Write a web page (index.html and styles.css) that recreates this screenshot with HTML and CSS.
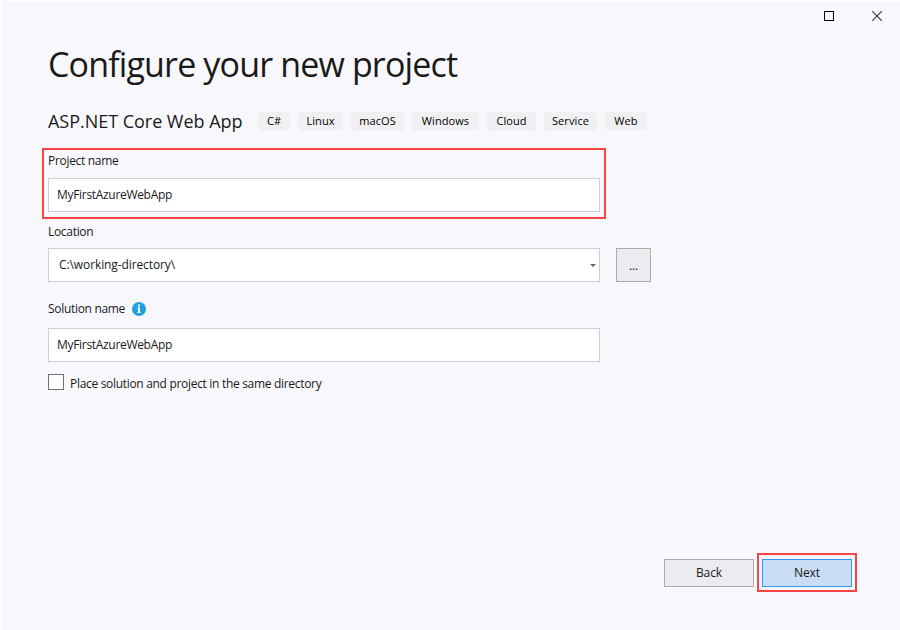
FILE: index.html
```html
<!DOCTYPE html>
<html lang="en">
<head>
<meta charset="utf-8">
<title>Configure your new project</title>
<link rel="stylesheet" href="styles.css">
</head>
<body>
<main class="dialog">
  <div class="window-controls">
    <svg class="control" width="10" height="10" viewBox="0 0 10 10"><rect x=".5" y=".5" width="9" height="9" fill="none" stroke="#000"/></svg>
    <svg class="control" width="10" height="10" viewBox="0 0 10 10"><path d="M.2.2 9.8 9.8M9.8.2.2 9.8" fill="none" stroke="#333" stroke-width="1.1"/></svg>
  </div>
  <h1 class="title"><span>Configure your new project</span></h1>
  <div class="template">
    <h2 class="template-name">ASP.NET Core Web App</h2>
    <ul class="tags">
      <li class="tag tag-csharp">C#</li>
      <li class="tag tag-linux">Linux</li>
      <li class="tag tag-macos">macOS</li>
      <li class="tag tag-windows">Windows</li>
      <li class="tag tag-cloud">Cloud</li>
      <li class="tag tag-service">Service</li>
      <li class="tag tag-web">Web</li>
    </ul>
  </div>
  <section class="field highlight">
    <div class="label">Project name</div>
    <div class="input">MyFirstAzureWebApp</div>
  </section>
  <section class="field location">
    <div class="label">Location</div>
    <div class="row">
      <div class="input combo"><span class="path">C:\working-directory\</span>
        <svg width="6" height="3" viewBox="0 0 6 3"><path d="M0 0H6L3 3Z" fill="#666"/></svg>
      </div>
      <div class="button browse">...</div>
    </div>
  </section>
  <section class="field solution">
    <div class="label">Solution name
      <svg class="info" width="14" height="14" viewBox="0 0 14 14"><circle cx="7" cy="7" r="7" fill="#1ba1e2"/><path d="M6 2.5h2v2H6zM5.5 5.5H8V10h.7v1H5.3v-1H6V6.5h-.5z" fill="#fff"/></svg>
    </div>
    <div class="input">MyFirstAzureWebApp</div>
  </section>
  <div class="check"><span class="box"></span><span class="check-text">Place solution and project in the same directory</span></div>
  <footer class="actions">
    <div class="button">Back</div>
    <div class="next-highlight"><div class="button primary">Next</div></div>
  </footer>
</main>
</body>
</html>
```
FILE: styles.css
```css
* { box-sizing: border-box; }
body {
  margin: 0;
  font: 12px/16px "Open Sans", "Noto Sans", sans-serif;
  letter-spacing: -0.31px;
  color: #1a1a1a;
}
.dialog {
  width: 900px;
  height: 630px;
  background: #f8f8fc;
  border-left: 1px solid #fff;
  border-top: 1px solid #fff;
  padding: 10px 18px 0 41px;
  display: flex;
  flex-direction: column;
}
.window-controls {
  height: 10px;
  display: flex;
  justify-content: flex-end;
  gap: 38px;
}
.title {
  margin: 19px 0 0 6px;
  height: 48px;
  font-size: 34px;
  line-height: 48px;
  font-weight: 400;
  letter-spacing: -0.85px;
  white-space: nowrap;
}
.template {
  margin: 21px 0 0 6px;
  height: 24px;
  display: flex;
  align-items: center;
}
.template-name {
  margin: 0;
  width: 210px;
  font-size: 18px;
  line-height: 24px;
  font-weight: 400;
  letter-spacing: -0.03px;
  white-space: nowrap;
}
.tags {
  margin: 0;
  padding: 0;
  list-style: none;
  display: flex;
  gap: 8px;
}
.tag {
  height: 19px;
  line-height: 18px;
  font-size: 11px;
  letter-spacing: 0.08px;
  text-align: center;
  color: #000;
  background: #f0f0f2;
  border-radius: 4px;
}
.tag-csharp { width: 32px; }
.tag-linux { width: 45px; }
.tag-macos { width: 53px; }
.tag-windows { width: 67px; }
.tag-cloud { width: 49px; }
.tag-service { width: 53px; }
.tag-web { width: 42px; }
.field { padding-left: 6px; }
.highlight {
  width: 564px;
  height: 71px;
  margin-top: 15px;
  border: 2px solid #fa4343;
  padding: 3px 4px 2px;
}
.label {
  height: 16px;
  display: flex;
  align-items: center;
}
.input {
  width: 552px;
  height: 34px;
  border: 1px solid #ccced8;
  background: #fff;
  padding: 0 8px;
  line-height: 32px;
}
.highlight .input { margin-top: 9px; }
.location { margin-top: 5px; }
.row { display: flex; gap: 16px; margin-top: 8px; }
.combo {
  display: flex;
  align-items: center;
  justify-content: space-between;
  padding: 0 3px 0 10px;
}
.path { letter-spacing: -0.1px; }
.button {
  width: 90px;
  height: 28px;
  border: 1px solid #acaca8;
  background: #ececf0;
  text-align: center;
  line-height: 26px;
  letter-spacing: -0.1px;
}
.browse { width: 35px; height: 34px; line-height: 34px; }
.solution { margin-top: 19px; }
.solution .input { margin-top: 11px; }
.info { margin-left: 7px; }
.check {
  display: flex;
  align-items: center;
  gap: 6px;
  height: 16px;
  margin: 12px 0 0 6px;
}
.box { width: 16px; height: 16px; border: 1px solid #717171; background: #fdfdfe; }
.check-text { padding-top: 4px; line-height: 14px; }
.actions {
  margin: 163px 25px 0 0;
  display: flex;
  justify-content: flex-end;
  align-items: center;
  gap: 3px;
}
.next-highlight { border: 2px solid #fa4343; padding: 4px 3px; height: 39px; }
.primary { border-color: #3399ff; background: #c9def5; }
```
